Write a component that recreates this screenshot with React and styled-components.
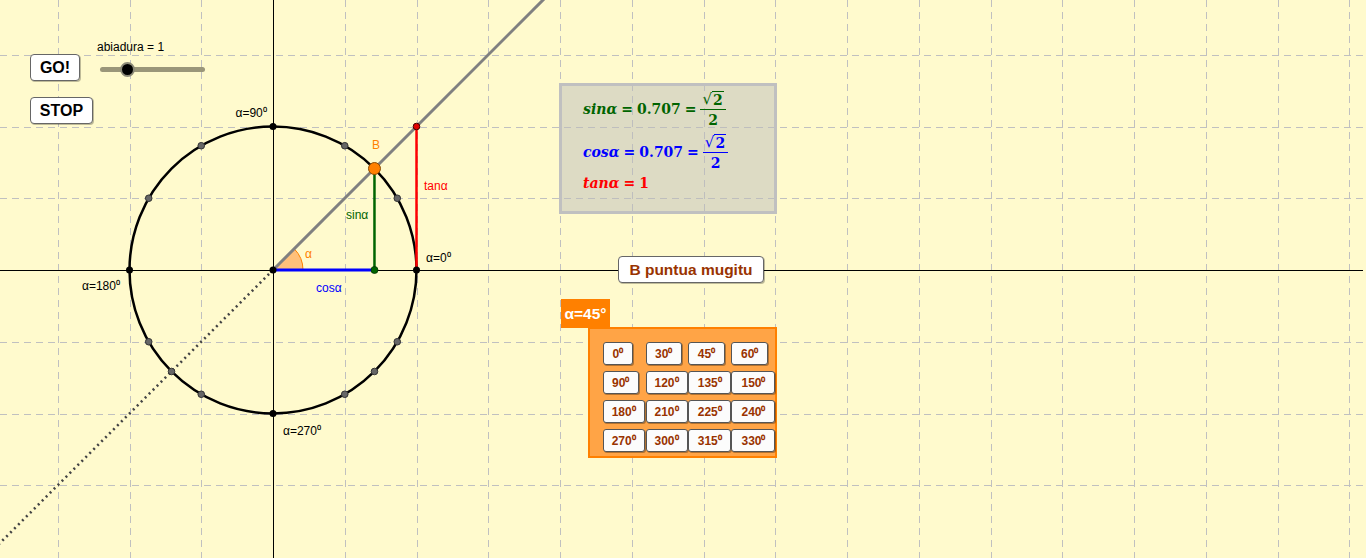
import React from "react";
import styled, { createGlobalStyle } from "styled-components";

const GlobalStyle = createGlobalStyle`
  html, body { margin: 0; padding: 0; background: #fffacd; }
  body { font-family: "Liberation Sans", Arial, sans-serif; }
`;

const Stage = styled.div`
  position: relative;
  width: 1366px;
  height: 558px;
  overflow: hidden;
  background: #fffacd;
`;

const Canvas = styled.svg`
  position: absolute;
  left: 0;
  top: 0;
  display: block;
`;

const Btn = styled.button`
  position: absolute;
  left: ${(p) => p.$x}px;
  top: ${(p) => p.$y}px;
  width: ${(p) => p.$w}px;
  height: ${(p) => p.$h}px;
  box-sizing: border-box;
  margin: 0;
  padding: 0;
  background: #ffffff;
  border: 1px solid #666;
  border-radius: 4px;
  box-shadow: 1px 1px 0 rgba(0, 0, 0, 0.25);
  font-family: "Liberation Sans", Arial, sans-serif;
  font-weight: bold;
  font-size: ${(p) => p.$fs || 16}px;
  color: ${(p) => p.$color || "#000"};
  display: flex;
  align-items: center;
  justify-content: center;
  cursor: pointer;
`;

const SliderLabel = styled.div`
  position: absolute;
  left: 97px;
  top: 40px;
  font-family: "Liberation Sans", Arial, sans-serif;
  font-size: 12px;
  color: #000;
`;

const SliderTrack = styled.div`
  position: absolute;
  left: 100px;
  top: 66.5px;
  width: 105px;
  height: 5px;
  border-radius: 3px;
  background: #9a9679;
`;

const Knob = styled.div`
  position: absolute;
  left: ${(p) => p.$pos}px;
  top: -5px;
  width: 15px;
  height: 15px;
  margin-left: -7.5px;
  box-sizing: border-box;
  border-radius: 50%;
  background: #000;
  border: 2.5px solid #8c8a78;
`;

const MathBox = styled.div`
  position: absolute;
  left: 559px;
  top: 83px;
  width: 218px;
  height: 131px;
  box-sizing: border-box;
  border: 3px solid #c0c0c0;
  background: rgba(188, 188, 188, 0.5);
  padding: 6px 0 0 21px;
  font-family: "DejaVu Serif", "Liberation Serif", serif;
  font-weight: bold;
  font-size: 14px;
  display: flex;
  flex-direction: column;
`;

const MathLine = styled.div`
  display: flex;
  align-items: center;
  height: ${(p) => p.$h}px;
  margin-top: ${(p) => p.$mt || 0}px;
  color: ${(p) => p.$color};
  white-space: nowrap;
`;

const Ital = styled.span`
  font-style: italic;
`;

const Eq = styled.span`
  margin: 0 4px;
  font-style: normal;
`;

const Frac = styled.span`
  display: inline-flex;
  flex-direction: column;
  align-items: center;
  line-height: 1;
`;

const Num = styled.span`
  display: inline-flex;
  align-items: flex-end;
  padding: 0 2px 2px;
  border-bottom: 1px solid currentColor;
`;

const Radical = styled.span`
  font-weight: normal;
  font-size: 15px;
`;

const Radicand = styled.span`
  border-top: 1.5px solid currentColor;
  padding: 1px 1px 0;
`;

const Den = styled.span`
  padding-top: 3px;
`;

const AngleTag = styled.div`
  position: absolute;
  left: 561px;
  top: 299px;
  width: 49px;
  height: 29px;
  background: #ff8000;
  color: #fff;
  font-family: "Liberation Sans", Arial, sans-serif;
  font-weight: bold;
  font-size: 15.5px;
  display: flex;
  align-items: center;
  justify-content: center;
`;

const AnglePanel = styled.div`
  position: absolute;
  left: 588px;
  top: 327px;
  width: 189px;
  height: 131px;
  box-sizing: border-box;
  border: 2px solid #ff8000;
  background: #ffa446;
  padding: 12.5px 0 0 12.5px;
  display: grid;
  grid-template-columns: 43px 42.6px 43.4px 44px;
  grid-template-rows: repeat(4, 23.5px);
  row-gap: 5.5px;
`;

const AngleBtn = styled.button`
  width: ${(p) => p.$w}px;
  height: 23.5px;
  box-sizing: border-box;
  margin: 0;
  padding: 0;
  justify-self: start;
  background: #fcfcfc;
  border: 1px solid #555;
  border-radius: 3px;
  box-shadow: 1px 1px 0 rgba(0, 0, 0, 0.3);
  color: #993300;
  font-family: "Liberation Sans", Arial, sans-serif;
  font-weight: bold;
  font-size: 12px;
  display: flex;
  align-items: center;
  justify-content: center;
  cursor: pointer;
`;

const O = { x: 273, y: 270 };
const U = 71.75;
const R = 143.5;

const gridX = [];
for (let k = -3; k <= 15; k++) if (k !== 0) gridX.push(Math.round(O.x + k * U) + 0.5);
const gridY = [];
for (let k = -3; k <= 3; k++) if (k !== 0) gridY.push(Math.round(O.y + k * U) + 0.5);

const pt = (deg) => {
  const r = (deg * Math.PI) / 180;
  return [O.x + R * Math.cos(r), O.y - R * Math.sin(r)];
};

const grayAngles = [30, 60, 120, 150, 210, 225, 240, 300, 315, 330];

const angleRows = [
  [["0⁰", 30.6], ["30⁰", 36.6], ["45⁰", 36.7], ["60⁰", 36.6]],
  [["90⁰", 36.6], ["120⁰", 42], ["135⁰", 43.4], ["150⁰", 44]],
  [["180⁰", 42.3], ["210⁰", 42], ["225⁰", 43.4], ["240⁰", 44]],
  [["270⁰", 42.3], ["300⁰", 42], ["315⁰", 43.4], ["330⁰", 44]],
];

const labelFont = {
  fontFamily: "'Liberation Sans', Arial, sans-serif",
  fontSize: 12,
};

function Drawing() {
  const c = Math.SQRT1_2;
  const B = [O.x + R * c, O.y - R * c];
  return (
    <Canvas width="1366" height="558" viewBox="0 0 1366 558">
      <g stroke="#c0c0c0" strokeWidth="1" strokeDasharray="7 5" shapeRendering="crispEdges">
        {gridX.map((x) => (
          <line key={"x" + x} x1={x} y1="0" x2={x} y2="558" />
        ))}
        {gridY.map((y) => (
          <line key={"y" + y} x1="0" y1={y} x2="1366" y2={y} />
        ))}
      </g>
      <line x1="0" y1={O.y + 0.5} x2="1363" y2={O.y + 0.5} stroke="#000" strokeWidth="1" shapeRendering="crispEdges" />
      <line x1={O.x + 0.5} y1="0" x2={O.x + 0.5} y2="558" stroke="#000" strokeWidth="1" shapeRendering="crispEdges" />

      <path
        d={`M${O.x},${O.y} L${O.x + 30},${O.y} A30,30 0 0,0 ${O.x + 30 * c},${O.y - 30 * c} Z`}
        fill="#ffc07a"
        stroke="none"
      />
      <path
        d={`M${O.x + 30},${O.y} A30,30 0 0,0 ${O.x + 30 * c},${O.y - 30 * c}`}
        fill="none"
        stroke="#ff8000"
        strokeWidth="1"
      />

      <circle cx={O.x} cy={O.y} r={R} fill="none" stroke="#000" strokeWidth="2.5" />

      <line x1={O.x} y1={O.y} x2={O.x + 300} y2={O.y - 300} stroke="#808080" strokeWidth="3" />
      <line
        x1={O.x}
        y1={O.y}
        x2={O.x - 290}
        y2={O.y + 290}
        stroke="#444"
        strokeWidth="2.6"
        strokeDasharray="2 3.6"
      />

      <line x1={O.x} y1={O.y} x2={B[0]} y2={O.y} stroke="#0000ff" strokeWidth="3" />
      <line x1={B[0]} y1={B[1]} x2={B[0]} y2={O.y} stroke="#006400" strokeWidth="2.5" />
      <line x1={O.x + R} y1={O.y - R} x2={O.x + R} y2={O.y} stroke="#ff0000" strokeWidth="2.5" />

      {grayAngles.map((a) => {
        const [x, y] = pt(a);
        return <circle key={a} cx={x} cy={y} r="3.3" fill="#666" stroke="#333" strokeWidth="1" />;
      })}
      {[
        [O.x - R, O.y],
        [O.x, O.y],
        [O.x, O.y - R],
        [O.x + R, O.y],
        [O.x, O.y + R],
      ].map(([x, y]) => (
        <circle key={x + "-" + y} cx={x} cy={y} r="3.5" fill="#000" />
      ))}
      <circle cx={B[0]} cy={O.y} r="3.5" fill="#006400" stroke="#003300" strokeWidth="0.8" />
      <circle cx={O.x + R} cy={O.y - R} r="3.3" fill="#e00000" stroke="#400" strokeWidth="1" />
      <circle cx={B[0]} cy={B[1]} r="6" fill="#ff8000" stroke="#8a4a00" strokeWidth="1" />

      <g style={labelFont}>
        <text x="235.5" y="117" fill="#000">α=90⁰</text>
        <text x="426" y="262" fill="#000">α=0⁰</text>
        <text x="82" y="290" fill="#000">α=180⁰</text>
        <text x="283" y="435" fill="#000">α=270⁰</text>
        <text x="372" y="149" fill="#ff8000">B</text>
        <text x="346" y="219" fill="#006400">sinα</text>
        <text x="424" y="190" fill="#ff0000">tanα</text>
        <text x="316" y="292" fill="#0000ff">cosα</text>
        <text x="305" y="258" fill="#ff8000">α</text>
      </g>
    </Canvas>
  );
}

function Fraction() {
  return (
    <Frac>
      <Num>
        <Radical>√</Radical>
        <Radicand>2</Radicand>
      </Num>
      <Den>2</Den>
    </Frac>
  );
}

export default function App() {
  return (
    <>
      <GlobalStyle />
      <Stage>
        <Drawing />

        <Btn $x={30} $y={54} $w={50} $h={27}>GO!</Btn>
        <Btn $x={30} $y={97} $w={63} $h={27}>STOP</Btn>

        <SliderLabel>abiadura = 1</SliderLabel>
        <SliderTrack>
          <Knob $pos={27} />
        </SliderTrack>

        <MathBox>
          <MathLine $color="#006400" $h={34} $mt={0}>
            <Ital>sinα</Ital>
            <Eq>=</Eq>
            <span>0.707</span>
            <Eq>=</Eq>
            <Fraction />
          </MathLine>
          <MathLine $color="#0000ff" $h={34} $mt={9}>
            <Ital>cosα</Ital>
            <Eq>=</Eq>
            <span>0.707</span>
            <Eq>=</Eq>
            <Fraction />
          </MathLine>
          <MathLine $color="#ff0000" $h={20} $mt={4}>
            <Ital>tanα</Ital>
            <Eq>=</Eq>
            <span>1</span>
          </MathLine>
        </MathBox>

        <Btn $x={618} $y={256} $w={146} $h={27} $fs={15.5} $color="#993300">
          B puntua mugitu
        </Btn>

        <AngleTag>α=45°</AngleTag>
        <AnglePanel>
          {angleRows.flat().map(([label, w]) => (
            <AngleBtn key={label} $w={w}>
              {label}
            </AngleBtn>
          ))}
        </AnglePanel>
      </Stage>
    </>
  );
}
